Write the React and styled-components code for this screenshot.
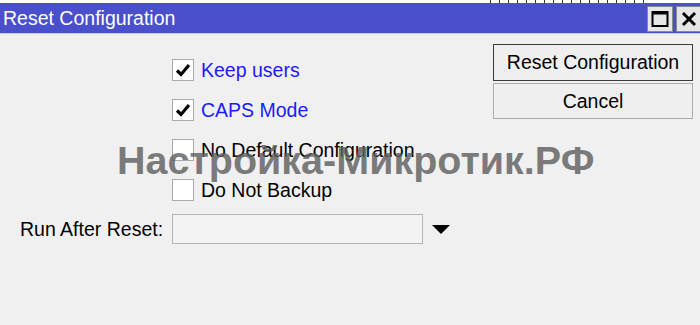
import styled, { createGlobalStyle } from 'styled-components';

const GlobalStyle = createGlobalStyle`
  html, body {
    margin: 0;
    padding: 0;
    background: #f0f0f0;
  }
  body {
    font-family: "Liberation Sans", Arial, sans-serif;
  }
`;

const options = [
  { label: 'Keep users', checked: true },
  { label: 'CAPS Mode', checked: true },
  { label: 'No Default Configuration', checked: false },
  { label: 'Do Not Backup', checked: false },
];

export default function App() {
  return (
    <>
      <GlobalStyle />
      <Window>
        <BehindStrip />
        <TitleBar>
          <Title>Reset Configuration</Title>
          <TitleButtons>
            <TitleButton aria-label="maximize">
              <svg width="18" height="18" viewBox="0 0 18 18">
                <rect x="1.5" y="2" width="15" height="14" fill="none" stroke="#000" strokeWidth="2" />
                <rect x="1" y="1" width="16" height="3.5" fill="#000" />
              </svg>
            </TitleButton>
            <TitleButton aria-label="close">
              <svg width="18" height="18" viewBox="0 0 18 18">
                <path d="M3 3 L15 15 M15 3 L3 15" stroke="#000" strokeWidth="3" />
              </svg>
            </TitleButton>
          </TitleButtons>
        </TitleBar>

        <Body>
          <Form>
            <CheckList>
              {options.map((opt) => (
                <CheckRow key={opt.label}>
                  <Box>
                    {opt.checked && (
                      <svg width="16" height="16" viewBox="0 0 16 16">
                        <path d="M2 8.5 L6 12.5 L14 3" fill="none" stroke="#000" strokeWidth="3.2" />
                      </svg>
                    )}
                  </Box>
                  <CheckLabel $active={opt.checked}>{opt.label}</CheckLabel>
                </CheckRow>
              ))}
            </CheckList>

            <FieldRow>
              <FieldLabel>Run After Reset:</FieldLabel>
              <FieldInput />
              <DropArrow />
            </FieldRow>
          </Form>

          <Actions>
            <Button $default>Reset Configuration</Button>
            <Button>Cancel</Button>
          </Actions>

          <Watermark>Настройка-Микротик.РФ</Watermark>
        </Body>
      </Window>
    </>
  );
}

const Window = styled.div`
  width: 700px;
  height: 325px;
  display: flex;
  flex-direction: column;
  background: #f0f0f0;
  overflow: hidden;
`;

const BehindStrip = styled.div`
  height: 3px;
  background:
    repeating-linear-gradient(90deg, #333 0 1px, transparent 1px 9px) 490px 0 / 160px 3px no-repeat,
    #ffffff;
`;

const TitleBar = styled.div`
  height: 30px;
  display: flex;
  align-items: center;
  justify-content: space-between;
  background: #4a4fcb;
  border-bottom: 1px solid #c9cbee;
`;

const Title = styled.div`
  color: #ffffff;
  font-size: 19.5px;
  padding-left: 3px;
  padding-top: 1px;
`;

const TitleButtons = styled.div`
  display: flex;
  gap: 3px;
  align-self: flex-end;
  margin-bottom: 1px;
  margin-right: -2px;
`;

const TitleButton = styled.div`
  width: 26px;
  height: 26px;
  box-sizing: border-box;
  display: flex;
  align-items: center;
  justify-content: center;
  background: #e6e6e6;
  border: 1px solid #8a8a8a;
`;

const Body = styled.div`
  position: relative;
  flex: 1;
  display: flex;
  justify-content: space-between;
  padding: 10px 7px 0 20px;
`;

const Form = styled.div`
  display: flex;
  flex-direction: column;
  padding-top: 15px;
`;

const CheckList = styled.div`
  display: flex;
  flex-direction: column;
  gap: 18px;
  padding-left: 152px;
`;

const CheckRow = styled.div`
  display: flex;
  align-items: center;
  gap: 7px;
  height: 22px;
`;

const Box = styled.div`
  width: 22px;
  height: 22px;
  box-sizing: border-box;
  background: #ffffff;
  border: 1px solid #a9a9a9;
  display: flex;
  align-items: center;
  justify-content: center;
`;

const CheckLabel = styled.span`
  font-size: 19.5px;
  color: ${(p) => (p.$active ? '#1a1aff' : '#000000')};
`;

const FieldRow = styled.div`
  display: flex;
  align-items: center;
  margin-top: 13px;
`;

const FieldLabel = styled.span`
  width: 152px;
  font-size: 19.5px;
  color: #000;
`;

const FieldInput = styled.div`
  width: 251px;
  height: 30px;
  box-sizing: border-box;
  background: #f3f3f3;
  border: 1px solid #b4b4b4;
`;

const DropArrow = styled.div`
  margin-left: 9px;
  width: 0;
  height: 0;
  border-left: 9px solid transparent;
  border-right: 9px solid transparent;
  border-top: 9px solid #000;
`;

const Actions = styled.div`
  display: flex;
  flex-direction: column;
  gap: 2px;
`;

const Button = styled.div`
  width: 200px;
  height: ${(p) => (p.$default ? '37px' : '36px')};
  box-sizing: border-box;
  display: flex;
  align-items: center;
  justify-content: center;
  font-size: 19.5px;
  color: #000;
  background: #efefef;
  border: 1px solid ${(p) => (p.$default ? '#3c3c3c' : '#adadad')};
`;

const Watermark = styled.div`
  position: absolute;
  left: 117px;
  top: 104px;
  font-size: 39.5px;
  font-weight: bold;
  color: rgba(95, 95, 95, 0.82);
  white-space: nowrap;
  pointer-events: none;
`;
